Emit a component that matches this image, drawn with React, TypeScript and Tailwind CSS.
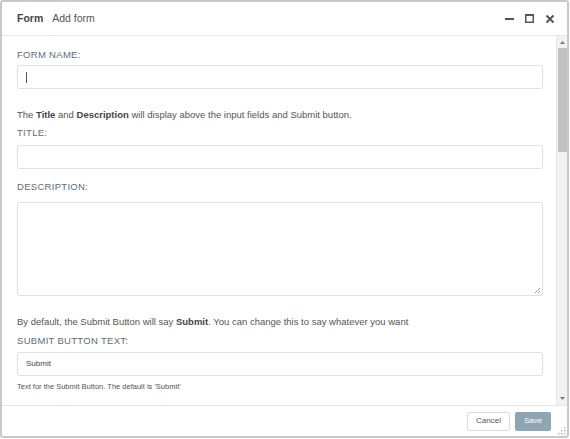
import React from 'react';

const labelCls = "block text-[9.5px] leading-[14px] text-[#5b6d7c] tracking-[0.3px]";
const inputCls = "block w-full h-[24px] border border-[#e1e1e1] bg-white rounded-[2px] px-[8px] text-[8px] text-[#333] outline-none";

export default function App() {
    return (
        <div className="w-[570px] h-[439px] bg-white font-['Liberation_Sans',Arial,sans-serif]">
            <div className="w-[569px] h-[438px] border-2 border-[#c9c9c9] rounded-[3px] flex flex-col bg-white overflow-hidden">
                {/* Header */}
                <div className="h-[34px] flex items-center border-b border-[#e6e6e6] px-[15px] shrink-0">
                    <span className="text-[10.5px] font-bold text-[#444]">Form</span>
                    <span className="text-[10.5px] text-[#555] ml-[9px]">Add form</span>
                    <div className="ml-auto flex items-center gap-[11px] mr-[-3px] text-[#555]">
                        <svg className="w-[9px] h-[9px]" viewBox="0 0 9 9">
                            <rect x="0" y="4" width="9" height="2" fill="currentColor" />
                        </svg>
                        <svg className="w-[9px] h-[9px]" viewBox="0 0 9 9">
                            <rect x="0.75" y="0.75" width="7.5" height="7.5" fill="none" stroke="currentColor" strokeWidth="1.5" />
                            <rect x="0" y="0" width="9" height="2" fill="currentColor" />
                        </svg>
                        <svg className="w-[10px] h-[10px]" viewBox="0 0 10 10">
                            <path d="M1.5 1.5L8.5 8.5M8.5 1.5L1.5 8.5" stroke="currentColor" strokeWidth="2" />
                        </svg>
                    </div>
                </div>

                {/* Body */}
                <div className="flex flex-1 min-h-0">
                    <div className="flex-1 pl-[15px] pr-[13px] pt-[12px] overflow-hidden">
                        <label className={labelCls}>FORM NAME:</label>
                        <div className={inputCls + " mt-[3px] flex items-center"}>
                            <span className="w-[1px] h-[11px] bg-[#555]" />
                        </div>

                        <p className="mt-[19px] text-[9.5px] leading-[14px] text-[#555]">
                            The <b className="text-[#444]">Title</b> and <b className="text-[#444]">Description</b> will display above the input fields and Submit button.
                        </p>
                        <label className={labelCls + " mt-[4px]"}>TITLE:</label>
                        <div className={inputCls + " mt-[5px]"} />

                        <label className={labelCls + " mt-[11px]"}>DESCRIPTION:</label>
                        <div className="relative mt-[8px] h-[94px] border border-[#e1e1e1] rounded-[2px] bg-white">
                            <svg className="absolute right-[1px] bottom-[1px] w-[7px] h-[7px]" viewBox="0 0 7 7">
                                <path d="M6 1L1 6M6 4L4 6" stroke="#999" strokeWidth="1" />
                            </svg>
                        </div>

                        <p className="mt-[19px] text-[9.5px] leading-[14px] text-[#555]">
                            By default, the Submit Button will say <b className="text-[#444]">Submit</b>. You can change this to say whatever you want
                        </p>
                        <label className={labelCls + " mt-[5px]"}>SUBMIT BUTTON TEXT:</label>
                        <div className={inputCls + " mt-[4px] flex items-center"}>
                            <span className="text-[8px] text-[#444]">Submit</span>
                        </div>
                        <p className="mt-[5px] text-[7.5px] leading-[12px] text-[#555]">Text for the Submit Button. The default is 'Submit'</p>
                    </div>

                    {/* Scrollbar */}
                    <div className="w-[11px] shrink-0 bg-[#f1f1f1] border-l border-[#e8e8e8] flex flex-col items-center">
                        <svg className="w-[7px] h-[7px] mt-[3px]" viewBox="0 0 7 7">
                            <path d="M1 5L3.5 2L6 5Z" fill="#777" />
                        </svg>
                        <div className="w-[9px] h-[104px] mt-[2px] bg-[#c1c1c1]" />
                        <div className="flex-1" />
                        <svg className="w-[7px] h-[7px] mb-[3px]" viewBox="0 0 7 7">
                            <path d="M1 2L3.5 5L6 2Z" fill="#777" />
                        </svg>
                    </div>
                </div>

                {/* Footer */}
                <div className="relative h-[31px] shrink-0 border-t border-[#e6e6e6] flex items-center justify-end gap-[5px] pr-[16px]">
                    <button className="h-[19px] w-[43px] border border-[#ddd] rounded-[2px] bg-white text-[8px] text-[#555]">Cancel</button>
                    <button className="h-[19px] w-[36px] rounded-[2px] bg-[#8ea5b4] text-[8px] text-white">Save</button>
                    <svg className="absolute right-[1px] bottom-[1px] w-[8px] h-[8px]" viewBox="0 0 8 8">
                        <rect x="6" y="0" width="1.5" height="1.5" fill="#bbb" />
                        <rect x="3" y="3" width="1.5" height="1.5" fill="#bbb" />
                        <rect x="6" y="3" width="1.5" height="1.5" fill="#bbb" />
                        <rect x="0" y="6" width="1.5" height="1.5" fill="#bbb" />
                        <rect x="3" y="6" width="1.5" height="1.5" fill="#bbb" />
                        <rect x="6" y="6" width="1.5" height="1.5" fill="#bbb" />
                    </svg>
                </div>
            </div>
        </div>
    );
}
